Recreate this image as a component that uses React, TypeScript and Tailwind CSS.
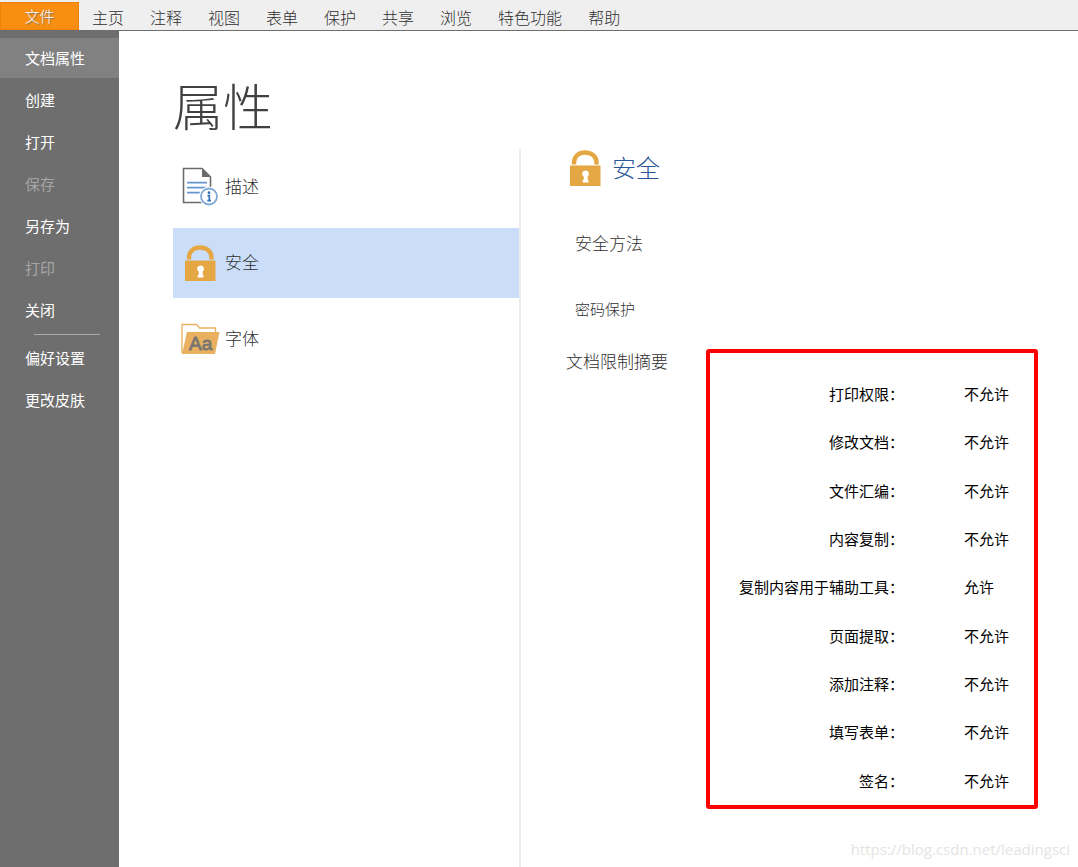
import { useState } from 'react'

const menus = ['主页', '注释', '视图', '表单', '保护', '共享', '浏览', '特色功能', '帮助']

const fileActions = [
  { label: '文档属性' },
  { label: '创建' },
  { label: '打开' },
  { label: '保存', disabled: true },
  { label: '另存为' },
  { label: '打印', disabled: true },
  { label: '关闭' }
]

const settingActions = [{ label: '偏好设置' }, { label: '更改皮肤' }]

const permissions = [
  { label: '打印权限', value: '不允许' },
  { label: '修改文档', value: '不允许' },
  { label: '文件汇编', value: '不允许' },
  { label: '内容复制', value: '不允许' },
  { label: '复制内容用于辅助工具', value: '允许' },
  { label: '页面提取', value: '不允许' },
  { label: '添加注释', value: '不允许' },
  { label: '填写表单', value: '不允许' },
  { label: '签名', value: '不允许' }
]

function DocumentIcon() {
  return (
    <svg width="40" height="40" viewBox="0 0 40 40" fill="none" aria-hidden="true">
      <path d="M2.5 1.5H21L29.5 10V35.5H2.5Z" fill="#fff" stroke="#6b6b6b" strokeWidth="1.6" />
      <path d="M21 1L30 10H21Z" fill="#6b6b6b" />
      <path d="M6 15.7H26M6 20.7H26M6 25.7H19" stroke="#6795cd" strokeWidth="1.8" />
      <circle cx="28" cy="29.5" r="10" fill="#fff" />
      <circle cx="28" cy="29.5" r="8" fill="#fff" stroke="#7fa9d6" strokeWidth="1.8" />
      <circle cx="28" cy="25.7" r="1.4" fill="#2f74bd" />
      <path d="M26.5 28.7H28.3V33M26.3 33.7H30" stroke="#2f74bd" strokeWidth="1.7" />
    </svg>
  )
}

function LockIcon() {
  return (
    <svg width="40" height="40" viewBox="0 0 40 40" fill="none" aria-hidden="true">
      <path d="M8 16.5V14.5C8 8 13 4.5 19 4.5S30.500 8 30.500 14.500V16.500" stroke="#e5a743" strokeWidth="4.4" />
      <rect x="4" y="17.5" width="30.5" height="20.5" fill="#e5a743" />
      <path d="M19.5 22.5A3.3 3.3 0 0 0 17.7 28.6V32H16.7V34.5H22.5V32H21.7V28.400A3.300 3.300 0 0 0 19.500 22.500Z" fill="#fff" />
    </svg>
  )
}

function FontsIcon() {
  return (
    <svg width="40" height="40" viewBox="0 0 40 40" aria-hidden="true">
      <path d="M1 34V5.5H15.5L18.5 9H34.5V16" fill="#fff" stroke="#e8b05f" strokeWidth="1.3" />
      <path d="M6 13H38.500L34 35H1Z" fill="#e8b05f" />
      <text
        x="8"
        y="31"
        fontSize="19"
        fontWeight="400"
        fontFamily="Liberation Sans, sans-serif"
        fill="#787572"
        stroke="#787572"
        strokeWidth="0.8"
      >
        Aa
      </text>
    </svg>
  )
}

const sections = [
  { id: 'description', label: '描述', icon: <DocumentIcon /> },
  { id: 'security', label: '安全', icon: <LockIcon /> },
  { id: 'fonts', label: '字体', icon: <FontsIcon /> }
]

export default function App() {
  const [action, setAction] = useState('文档属性')
  const [section, setSection] = useState('security')

  const renderAction = (item: { label: string; disabled?: boolean }) => (
    <button
      key={item.label}
      disabled={item.disabled}
      onClick={() => setAction(item.label)}
      className={`h-10 shrink-0 pl-[25px] text-left text-[15px] leading-5 ${
        action === item.label ? 'bg-[#818181] text-white' : item.disabled ? 'text-[#a5a5a5]' : 'text-white'
      }`}
    >
      {item.label}
    </button>
  )

  return (
    <div className="relative flex min-h-screen flex-col bg-white font-['Noto_Sans_CJK_SC',sans-serif] font-light text-[#303030]">
      {/* Menu bar */}
      <nav className="flex h-[31px] items-end border-b border-[#6e6e6e] bg-[#efefef]">
        <button className="h-7 w-[79px] border border-[#ee8208] bg-[#f98e10] text-[15px] leading-5 text-white [text-shadow:1px_1px_1px_#6e6e6e]">
          文件
        </button>
        {menus.map(menu => (
          <button key={menu} className="h-7 px-[13px] pt-0.5 text-base leading-5">
            {menu}
          </button>
        ))}
      </nav>

      <div className="flex flex-1">
        {/* File menu */}
        <aside className="flex w-[119px] shrink-0 flex-col bg-[#6e6e6e] pt-[7px] font-normal">
          <div className="flex flex-col gap-0.5">{fileActions.map(renderAction)}</div>
          <hr className="mt-1 mb-[3px] ml-[34px] w-[66px] border-[#aaaaaa]" />
          <div className="flex flex-col gap-0.5">{settingActions.map(renderAction)}</div>
        </aside>

        <main className="flex flex-1 flex-col pl-[54px]">
          <h1 className="flex h-[118px] items-center pt-7 text-[50px] leading-[60px] text-[#404040]">属性</h1>

          <div className="flex flex-1">
            <div className="flex w-[346px] shrink-0 flex-col gap-1.5 pt-[3px]">
              {sections.map(item => (
                <button
                  key={item.id}
                  onClick={() => setSection(item.id)}
                  className={`flex h-[70px] items-center gap-1 pl-2 text-left text-[17px] leading-6 ${
                    section === item.id ? 'bg-[#cbdef9]' : ''
                  }`}
                >
                  {item.icon}
                  <span className="pb-0.5">{item.label}</span>
                </button>
              ))}
            </div>

            <section className="flex-1 border-l-2 border-[#ebebeb] pl-[45px]">
              <h2 className="flex h-[38px] items-center gap-1.5 text-2xl leading-8 text-[#2b5797]">
                <LockIcon />
                <span className="pb-0.5">安全</span>
              </h2>
              <h3 className="mt-11 pl-[9px] text-[17px] leading-6">安全方法</h3>
              <p className="mt-11 pl-[9px] text-[15px] leading-5">密码保护</p>

              <div className="mt-[30px] flex">
                <h3 className="w-[140px] shrink-0 text-[17px] leading-6">文档限制摘要</h3>
                <div className="w-[332px] rounded-[3px] border-4 border-[#ff0000] pt-[17px]">
                  <table className="h-[435px] w-full text-[15px] leading-5 text-black">
                    <tbody>
                      {permissions.map(item => (
                        <tr key={item.label}>
                          <th scope="row" className="w-[194px] p-0 text-right font-normal">
                            {item.label}：
                          </th>
                          <td className="p-0 pl-[60px] font-normal">{item.value}</td>
                        </tr>
                      ))}
                    </tbody>
                  </table>
                </div>
              </div>
            </section>
          </div>
        </main>
      </div>

      <p className="absolute right-2 bottom-2 font-['Open_Sans',sans-serif] text-[15px] leading-5 font-normal text-[#e4e4e4]">
        https://blog.csdn.net/leadingsci
      </p>
    </div>
  )
}
